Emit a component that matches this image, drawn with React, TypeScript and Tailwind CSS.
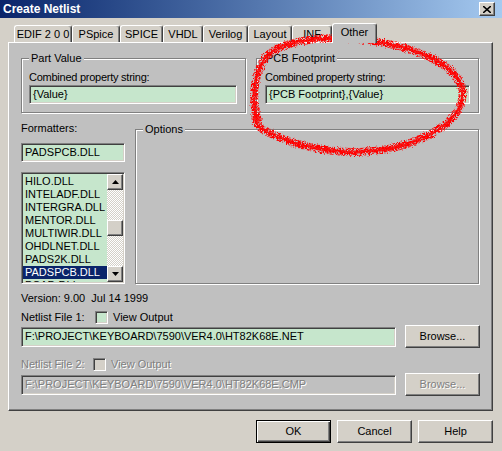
import React from 'react'

const tabs = [
  { label: 'EDIF 2 0 0', cls: 'w-[58px]' },
  { label: 'PSpice', cls: 'w-[48px]' },
  { label: 'SPICE', cls: 'w-[43px]' },
  { label: 'VHDL', cls: 'w-[40px]' },
  { label: 'Verilog', cls: 'w-[45px]' },
  { label: 'Layout', cls: 'w-[44px]' },
  { label: 'INF', cls: 'w-[40px]' },
]

const formatters = [
  'HILO.DLL',
  'INTELADF.DLL',
  'INTERGRA.DLL',
  'MENTOR.DLL',
  'MULTIWIR.DLL',
  'OHDLNET.DLL',
  'PADS2K.DLL',
  'PADSPCB.DLL',
  'PCAD.DLL',
]

const sunken =
  'border border-t-[#808080] border-l-[#808080] border-b-white border-r-white shadow-[inset_1px_1px_0_#404040,inset_-1px_-1px_0_#d4d0c8]'
const raised =
  'bg-[#d4d0c8] border border-t-white border-l-white border-b-[#404040] border-r-[#404040] shadow-[inset_-1px_-1px_0_#808080]'
const etched = 'border border-[#808080] shadow-[inset_1px_1px_0_#fff,1px_1px_0_#fff]'
const disabledText = 'text-[#808080] [text-shadow:1px_1px_0_#fff]'

// the marker loop drawn over the PCB Footprint box
const loop =
  'M258 120 C252 102, 252 78, 265 58 C276 45, 300 39, 335 38 C378 38, 426 50, 450 70 C468 86, 466 106, 448 122 C430 138, 400 150, 360 152 C320 153, 285 142, 264 130 C257 126, 254 122, 256 110'

function GroupBox({ title, className, children }: { title: string; className: string; children?: React.ReactNode }) {
  return (
    <div className={`relative ${etched} ${className}`}>
      <span className="absolute -top-[7px] left-[7px] bg-[#c0c0c0] px-[2px]">{title}</span>
      {children}
    </div>
  )
}

function Arrow({ up }: { up?: boolean }) {
  return (
    <div className={`w-[16px] h-[16px] flex items-center justify-center ${raised}`}>
      <svg width="7" height="4" viewBox="0 0 7 4">
        {up ? <polygon points="3.5,0 7,4 0,4" fill="#000" /> : <polygon points="0,0 7,0 3.5,4" fill="#000" />}
      </svg>
    </div>
  )
}

function Checkbox({ disabled }: { disabled?: boolean }) {
  return <div className={`w-[13px] h-[13px] ${sunken} ${disabled ? 'bg-[#d4d0c8]' : 'bg-[#c6e6cc]'}`} />
}

export default function App() {
  return (
    <div className="relative w-[502px] h-[451px] overflow-hidden bg-[#d4d0c8] text-black font-['Liberation_Sans',Arial,sans-serif] text-[11px] leading-[13px]">
      {/* Title bar */}
      <div className="h-[18px] flex items-center pl-[3px] pr-[7px] bg-gradient-to-r from-[#0a246a] to-[#a6caf0]">
        <span className="text-white font-bold text-[12px]">Create Netlist</span>
        <div className={`ml-auto w-[16px] h-[14px] flex items-center justify-center ${raised}`}>
          <svg width="8" height="7" viewBox="0 0 8 7">
            <path d="M0 0 L8 7 M8 0 L0 7" stroke="#000" strokeWidth="1.6" />
          </svg>
        </div>
      </div>

      <div className="pl-[8px] pt-[5px]">
        {/* Tabs */}
        <div className="flex items-end h-[19px] pl-[6px]">
          {tabs.map(t => (
            <div
              key={t.label}
              className={`${t.cls} h-[17px] flex items-center justify-center bg-[#d4d0c8] border-t border-l border-white border-r border-r-[#404040] rounded-t-[3px] shadow-[inset_-1px_0_0_#808080]`}
            >
              {t.label}
            </div>
          ))}
          <div className="relative z-10 -mb-px w-[45px] h-[20px] flex items-start justify-center pt-[2px] bg-[#c0c0c0] border-t border-l border-white border-r border-r-[#404040] rounded-t-[3px] shadow-[inset_-1px_0_0_#808080]">
            Other
          </div>
        </div>

        {/* Tab panel */}
        <div className="w-[485px] h-[369px] bg-[#c0c0c0] border border-t-white border-l-white border-b-[#404040] border-r-[#404040] shadow-[inset_-1px_-1px_0_#808080] pl-[12px] pt-[15px]">
          <div className="flex gap-[10px]">
            <GroupBox title="Part Value" className="w-[225px] h-[55px] pl-[7px] pr-[8px] pt-[12px]">
              <div className="tracking-[-0.25px]">Combined property string:</div>
              <div className={`mt-px h-[19px] flex items-center px-[3px] bg-[#c6e6cc] ${sunken}`}>{'{Value}'}</div>
            </GroupBox>
            <GroupBox title="PCB Footprint" className="w-[223px] h-[55px] pl-[8px] pr-[8px] pt-[12px]">
              <div className="tracking-[-0.25px]">Combined property string:</div>
              <div className={`mt-px h-[19px] flex items-center px-[3px] bg-[#c6e6cc] ${sunken}`}>
                {'{PCB Footprint},{Value}'}
              </div>
            </GroupBox>
          </div>

          <div className="flex gap-[10px] mt-[9px]">
            <div className="w-[104px] flex flex-col">
              <div className="h-[13px]">Formatters:</div>
              <div className={`mt-[8px] h-[19px] flex items-center px-[3px] bg-[#c6e6cc] ${sunken}`}>PADSPCB.DLL</div>
              <div className={`mt-[10px] h-[112px] flex bg-[#c6e6cc] ${sunken} p-px overflow-hidden`}>
                <div className="flex-1 pt-px overflow-hidden">
                  {formatters.map(f => (
                    <div
                      key={f}
                      className={`h-[13px] pl-[2px] whitespace-nowrap ${f === 'PADSPCB.DLL' ? 'bg-[#0a246a] text-white' : ''}`}
                    >
                      {f}
                    </div>
                  ))}
                </div>
                <div className="w-[16px] flex flex-col bg-[repeating-conic-gradient(#ffffff_0%_25%,#d4d0c8_0%_50%)] bg-[length:2px_2px]">
                  <Arrow up />
                  <div className="flex-1 pt-[30px]">
                    <div className={`w-[16px] h-[16px] ${raised}`} />
                  </div>
                  <Arrow />
                </div>
              </div>
            </div>
            <GroupBox title="Options" className="mt-[7px] w-[344px] h-[155px]" />
          </div>

          <div className="mt-[8px] h-[13px] whitespace-pre">Version: 9.00  Jul 14 1999</div>
          <div className="mt-[5px] h-[14px] flex items-center">
            <span className="w-[74px]">Netlist File 1:</span>
            <Checkbox />
            <span className="ml-[5px]">View Output</span>
          </div>
          <div className="mt-px h-[23px] flex items-center gap-[9px]">
            <div className={`w-[375px] h-[20px] flex items-center px-[3px] bg-[#c6e6cc] ${sunken}`}>
              F:\PROJECT\KEYBOARD\7590\VER4.0\HT82K68E.NET
            </div>
            <div className={`w-[75px] h-[23px] flex items-center justify-center ${raised}`}>Browse...</div>
          </div>

          <div className={`mt-[9px] h-[14px] flex items-center ${disabledText}`}>
            <span className="w-[72px]">Netlist File 2:</span>
            <Checkbox disabled />
            <span className="ml-[5px]">View Output</span>
          </div>
          <div className="mt-[2px] h-[23px] flex items-center gap-[9px]">
            <div className={`w-[375px] h-[20px] flex items-center px-[3px] bg-[#c0c0c0] ${sunken} ${disabledText}`}>
              F:\PROJECT\KEYBOARD\7590\VER4.0\HT82K68E.CMP
            </div>
            <div className={`w-[75px] h-[23px] flex items-center justify-center ${raised} ${disabledText}`}>Browse...</div>
          </div>
        </div>

        {/* Dialog buttons */}
        <div className="w-[485px] mt-[9px] flex justify-end gap-[6px]">
          <div className="w-[75px] h-[23px] flex items-center justify-center bg-[#d4d0c8] border border-black shadow-[inset_1px_1px_0_#fff,inset_-1px_-1px_0_#404040,inset_-2px_-2px_0_#808080]">
            OK
          </div>
          <div className={`w-[75px] h-[23px] flex items-center justify-center ${raised}`}>Cancel</div>
          <div className={`w-[75px] h-[23px] flex items-center justify-center ${raised}`}>Help</div>
        </div>
      </div>

      {/* Red marker annotation */}
      <svg className="absolute left-0 top-0 pointer-events-none" width="502" height="451" viewBox="0 0 502 451">
        <defs>
          <filter id="spray" x="-10%" y="-10%" width="120%" height="120%">
            <feTurbulence type="fractalNoise" baseFrequency="1.1" numOctaves="1" seed="4" result="noise" />
            <feColorMatrix
              in="noise"
              type="matrix"
              values="0 0 0 0 0  0 0 0 0 0  0 0 0 0 0  7 0 0 0 -2.9"
              result="mask"
            />
            <feComposite in="SourceGraphic" in2="mask" operator="in" result="speck" />
            <feDisplacementMap in="speck" in2="noise" scale="4" xChannelSelector="R" yChannelSelector="G" />
          </filter>
          <filter id="rough" x="-10%" y="-10%" width="120%" height="120%">
            <feTurbulence type="fractalNoise" baseFrequency="0.8" numOctaves="2" seed="9" result="n" />
            <feDisplacementMap in="SourceGraphic" in2="n" scale="4" xChannelSelector="R" yChannelSelector="G" />
          </filter>
        </defs>
        <path d={loop} fill="none" stroke="#ff0000" strokeWidth="8" strokeLinecap="round" filter="url(#spray)" />
        <path d={loop} fill="none" stroke="#ff0000" strokeWidth="3" strokeLinecap="round" opacity="0.85" filter="url(#rough)" />
      </svg>
    </div>
  )
}
